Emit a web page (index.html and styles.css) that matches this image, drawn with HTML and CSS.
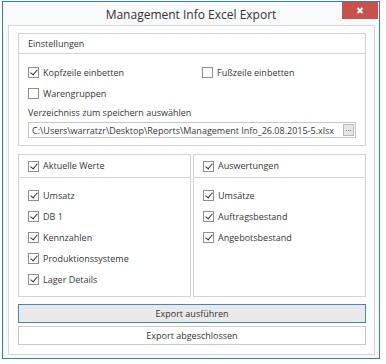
FILE: index.html
```html
<!doctype html>
<html lang="de">
<head>
    <meta charset="UTF-8">
    <title>Management Info Excel Export</title>
    <link rel="stylesheet" href="styles.css">
</head>
<body>
<div class="window">
    <div class="titlebar">
        <div class="title">Management Info Excel Export</div>
        <a class="close" href="javascript:;">
            <svg width="8" height="7" viewBox="0 0 8 7"><path d="M1.5 1 L6.5 6 M6.5 1 L1.5 6" stroke="#fff" stroke-width="2"/></svg>
        </a>
    </div>
    <div class="client">
        <div class="group settings">
            <div class="group-head">Einstellungen</div>
            <div class="group-body">
                <div class="row">
                    <label class="check on"><span class="box"></span>Kopfzeile einbetten</label>
                    <label class="check right"><span class="box"></span>Fußzeile einbetten</label>
                </div>
                <div class="row">
                    <label class="check"><span class="box"></span>Warengruppen</label>
                </div>
                <div class="label">Verzeichniss zum speichern auswählen</div>
                <div class="path">
                    <span class="path-text">C:\Users\warratzr\Desktop\Reports\Management Info_26.08.2015-5.xlsx</span>
                    <a class="browse" href="javascript:;">...</a>
                </div>
            </div>
        </div>

        <div class="columns">
            <div class="group col">
                <div class="group-head"><label class="check on"><span class="box"></span>Aktuelle Werte</label></div>
                <div class="group-body list">
                    <label class="check on"><span class="box"></span>Umsatz</label>
                    <label class="check on"><span class="box"></span>DB 1</label>
                    <label class="check on"><span class="box"></span>Kennzahlen</label>
                    <label class="check on"><span class="box"></span>Produktionssysteme</label>
                    <label class="check on"><span class="box"></span>Lager Details</label>
                </div>
            </div>
            <div class="group col">
                <div class="group-head"><label class="check on"><span class="box"></span>Auswertungen</label></div>
                <div class="group-body list">
                    <label class="check on"><span class="box"></span>Umsätze</label>
                    <label class="check on"><span class="box"></span>Auftragsbestand</label>
                    <label class="check on"><span class="box"></span>Angebotsbestand</label>
                </div>
            </div>
        </div>

        <a class="btn primary" href="javascript:;">Export ausführen</a>
        <a class="btn" href="javascript:;">Export abgeschlossen</a>
    </div>
</div>
</body>
</html>
```

FILE: styles.css
```css
*{
    margin: 0;
    padding: 0;
    box-sizing: border-box;
}

body{
    background-color: #fff;
    font-family: "Open Sans", "Noto Sans", sans-serif;
    font-size: 9px;
    color: #363636;
}

.window{
    width: 378px;
    height: 358px;
    margin: 1px 0 0 2px;
    border: 1px solid #2f7dbf;
    background-color: #f8f9fa;
    display: flex;
    flex-direction: column;
}

.titlebar{
    position: relative;
    height: 23px;
    flex: none;
}
.title{
    text-align: center;
    font-size: 12px;
    line-height: 26px;
    color: #333;
}
.close{
    position: absolute;
    top: 0;
    right: 1px;
    width: 36px;
    height: 17px;
    background-color: #c9504b;
    display: flex;
    align-items: center;
    justify-content: center;
}

.client{
    flex: 1;
    margin: 0 4px 5px 5px;
    border: 1px solid #d6d6d6;
    background-color: #fff;
    padding: 7px 8px 9px 9px;
    display: flex;
    flex-direction: column;
}

.group{
    border: 1px solid #d3d3d3;
}
.group-head{
    height: 20px;
    border-bottom: 1px solid #d3d3d3;
    padding-left: 9px;
    line-height: 19px;
    display: flex;
    align-items: center;
}
.settings{
    height: 113px;
}
.settings .group-body{
    padding: 8px 9px 0 9px;
}
.row{
    display: flex;
    height: 21px;
}
.row .right{
    margin-left: 78px;
}
.label{
    margin-top: 1px;
    height: 15px;
    line-height: 15px;
}
.path{
    margin-top: 2px;
    height: 16px;
    border: 1px solid #c6c6c6;
    display: flex;
    align-items: center;
    padding: 0 1px 0 3px;
}
.path-text{
    flex: 1;
    white-space: nowrap;
    overflow: hidden;
}
.browse{
    width: 11px;
    height: 12px;
    border: 1px solid #b8b8b8;
    background-color: #e6e6e6;
    color: #555;
    font-size: 8px;
    line-height: 6px;
    text-align: center;
    text-decoration: none;
}

.check{
    display: flex;
    align-items: center;
    height: 21px;
    white-space: nowrap;
}
.box{
    width: 11px;
    height: 11px;
    border: 1px solid #8f8f8f;
    background-color: #fff;
    margin-right: 4px;
    flex: none;
    position: relative;
}
.on .box::after{
    content: "";
    position: absolute;
    left: 3px;
    top: 0;
    width: 3px;
    height: 6px;
    border-right: 1.5px solid #333;
    border-bottom: 1.5px solid #333;
    transform: rotate(40deg);
}

.columns{
    margin-top: 8px;
    height: 143px;
    display: flex;
    gap: 2px;
}
.col{
    flex: 1;
}
.columns .group-head{
    height: 23px;
    line-height: 22px;
}
.list{
    padding: 7px 9px 0 9px;
    display: flex;
    flex-direction: column;
}

.btn{
    display: block;
    height: 19px;
    line-height: 17px;
    text-align: center;
    border: 1px solid #c9c9c9;
    background-color: #fff;
    color: #333;
    text-decoration: none;
}
.primary{
    margin-top: 7px;
    border-color: #3a87c8;
    background-color: #e9e9e9;
}
.primary + .btn{
    margin-top: 3px;
}
```
